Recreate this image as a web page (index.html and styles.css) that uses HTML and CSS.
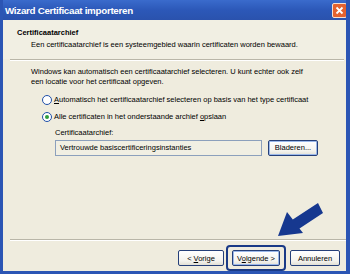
FILE: index.html
```html
<!DOCTYPE html>
<html lang="nl">
<head>
    <meta charset="UTF-8">
    <title>Wizard Certificaat importeren</title>
    <link rel="stylesheet" href="styles.css">
</head>
<body>
    <div class="window">
        <div class="titlebar">
            <span class="title">Wizard Certificaat importeren</span>
            <span class="close">
                <svg width="9" height="9" viewBox="0 0 9 9"><path d="M1.5 1.5 L7.5 7.5 M7.5 1.5 L1.5 7.5" stroke="#fff" stroke-width="1.8"/></svg>
            </span>
        </div>

        <div class="header">
            <div class="header-title">Certificaatarchief</div>
            <div class="header-sub">Een certificaatarchief is een systeemgebied waarin certificaten worden bewaard.</div>
        </div>
        <div class="sep top"></div>

        <div class="content">
            <p class="intro">Windows kan automatisch een certificaatarchief selecteren. U kunt echter ook zelf<br>een locatie voor het certificaat opgeven.</p>

            <div class="option">
                <span class="radio"></span>
                <span><u>A</u>utomatisch het certificaatarchief selecteren op basis van het type certificaat</span>
            </div>
            <div class="option">
                <span class="radio checked"></span>
                <span>Alle certificaten in het onderstaande archief <u>o</u>pslaan</span>
            </div>

            <div class="store">
                <div class="store-label">Certificaatarchief:</div>
                <div class="store-row">
                    <div class="textbox">Vertrouwde basiscertificeringsinstanties</div>
                    <div class="btn browse">Bladeren...</div>
                </div>
            </div>
        </div>

        <div class="sep bottom"></div>
        <div class="footer">
            <div class="btn"><span>&lt; <u>V</u>orige</span></div>
            <div class="highlight"><div class="btn"><span>V<u>o</u>lgende &gt;</span></div></div>
            <div class="btn wide">Annuleren</div>
        </div>

        <!-- pijl die naar de knop wijst -->
        <svg class="arrow" width="60" height="45" viewBox="0 0 60 45">
            <polygon points="48,8 53,18 29.5,33.5 33,38 8,41 17,17 22.8,24.6" fill="#16388f"/>
        </svg>
    </div>
</body>
</html>
```

FILE: styles.css
```css
body {
    margin: 0;
    font-family: "Liberation Sans", Arial, sans-serif;
    font-size: 7.5px;
    color: #000;
    white-space: nowrap;
}

.window {
    position: relative;
    width: 350px;
    height: 274px;
    box-sizing: border-box;
    background: #efecde;
    border-left: 3px solid #2b55b4;
    border-right: 4px solid #2b55b4;
    border-bottom: 3px solid #2b55b4;
    display: flex;
    flex-direction: column;
    overflow: hidden;
}

.titlebar {
    height: 20px;
    flex-shrink: 0;
    margin-left: -3px;
    margin-right: -4px;
    padding: 0 3px 0 5px;
    background: linear-gradient(to bottom, #3a6bcc, #2c58b8 50%, #2a52ad);
    display: flex;
    align-items: center;
    justify-content: space-between;
}

.title {
    color: #fff;
    font-weight: bold;
    font-size: 9.8px;
    letter-spacing: -0.3px;
}

.close {
    width: 13px;
    height: 13px;
    border: 1px solid #f6e0d2;
    border-radius: 2px;
    background: #e4622f;
    display: flex;
    align-items: center;
    justify-content: center;
}

.header {
    height: 39px;
    flex-shrink: 0;
    padding: 8px 0 0 14px;
    box-sizing: border-box;
    background: #f1efe3;
    line-height: 10px;
}

.header-title {
    font-weight: bold;
    margin-bottom: 2px;
}

.header-sub {
    padding-left: 14px;
}

.sep {
    flex-shrink: 0;
    margin-left: 7px;
    border-top: 1px solid #b9b6a8;
    border-bottom: 1px solid #fff;
}

.sep.top {
    margin-right: 2px;
}

.content {
    flex: 1;
    padding: 6px 0 0 28px;
    line-height: 10px;
}

.intro {
    margin: 0 0 8px 0;
}

.option {
    display: flex;
    align-items: center;
    gap: 2px;
    height: 10px;
    margin: 0 0 7px 11px;
}

.radio {
    width: 8px;
    height: 8px;
    border: 1px solid #1f4fa8;
    border-radius: 50%;
    background: #fff;
    position: relative;
}

.radio.checked::after {
    content: "";
    position: absolute;
    left: 2px;
    top: 2px;
    width: 4px;
    height: 4px;
    border-radius: 50%;
    background: #2f9e3c;
}

.store {
    margin: -1px 0 0 24px;
}

.store-label {
    margin-bottom: 2px;
}

.store-row {
    display: flex;
    align-items: center;
    gap: 6px;
}

.textbox {
    width: 207px;
    height: 16px;
    box-sizing: border-box;
    border: 1px solid #8ca0bc;
    background: #f1efe3;
    padding: 0 4px;
    line-height: 14px;
}

.btn {
    width: 46px;
    height: 16px;
    box-sizing: border-box;
    border: 1px solid #253f79;
    border-radius: 2px;
    background: linear-gradient(to bottom, #fff, #f4f3ee 70%, #e2e0d6);
    display: flex;
    align-items: center;
    justify-content: center;
}

.btn.wide,
.browse {
    width: 50px;
    box-shadow: inset 0 0 0 1px #9bb8ea;
}

.btn.wide {
    box-shadow: none;
}

.sep.bottom {
    margin-right: -4px;
}

.footer {
    height: 30px;
    flex-shrink: 0;
    box-sizing: border-box;
    padding: 4px 6px 0 0;
    display: flex;
    align-items: center;
    justify-content: flex-end;
}

.highlight {
    padding: 3px 4px;
    border: 2px solid #1a3a86;
    border-radius: 4px;
    margin: 0 4px 0 2px;
}

.highlight .btn {
    width: 48px;
    box-shadow: inset 0 0 0 1px #9bb8ea;
}

.arrow {
    position: absolute;
    left: 267px;
    top: 195px;
}
```
